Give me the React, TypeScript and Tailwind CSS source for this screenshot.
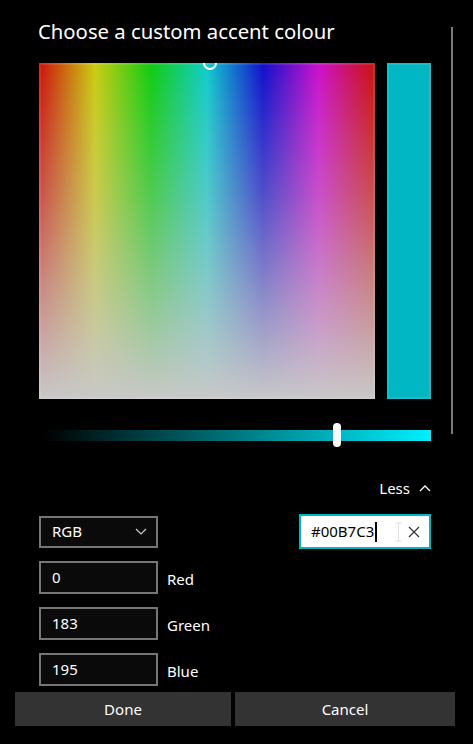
import React from "react";

const font = { fontFamily: '"Segoe UI", "Noto Sans", "Open Sans", sans-serif' };

function Field({ value, label }: { value: string; label?: string }) {
  return (
    <div className="flex items-center">
      <div className="w-[119px] h-[33px] border-2 border-[#767676] bg-[#0a0a0a] flex items-center pl-[11px] text-[15px] text-white">
        {value}
      </div>
      {label && <div className="ml-[9px] mt-[4px] text-[15px] text-white">{label}</div>}
    </div>
  );
}

export default function App() {
  return (
    <div className="w-[473px] h-[744px] bg-black relative overflow-hidden text-white" style={font}>
      <div className="h-[692px] overflow-hidden pl-[39px] pt-[17px]">
        <div className="text-[20.3px] leading-[28px] -ml-[1px]">Choose a custom accent colour</div>
        <div className="flex mt-[18px] gap-[12px]">
          <div
            className="relative w-[336px] h-[336px] overflow-hidden"
            style={{
              background:
                "linear-gradient(to bottom, rgba(200,200,200,0) 0%, rgba(200,200,200,0.35) 40%, rgba(200,200,200,1) 100%), linear-gradient(to right, rgb(204,16,12) 0%, rgb(204,204,16) 16.67%, rgb(16,204,16) 33.33%, rgb(16,204,204) 50%, rgb(16,16,204) 66.67%, rgb(204,16,204) 83.33%, rgb(204,16,12) 100%)",
            }}
          >
            <div className="absolute inset-0 border-2 border-white/10" />
            <div className="absolute left-[164px] top-[-7px] w-[14px] h-[14px] rounded-full border-2 border-white" />
          </div>
          <div className="w-[44px] h-[336px] bg-[#00B7C3] border-2 border-white/10" />
        </div>
        <div className="relative mt-[31px] ml-[4px] w-[388px] h-[11px]">
          <div
            className="w-full h-full"
            style={{ background: "linear-gradient(to right, #000000, #00f0ff)" }}
          />
          <div className="absolute left-[290px] top-[-7px] w-[8px] h-[24px] rounded-full bg-white" />
        </div>
        <div className="flex justify-end items-center w-[392px] mt-[37px] text-[15px] leading-[20px]">
          <span>Less</span>
          <svg className="ml-[9px]" width="12" height="8" viewBox="0 0 12 8">
            <path d="M1 7 L6 2 L11 7" fill="none" stroke="white" strokeWidth="1.3" />
          </svg>
        </div>
        <div className="flex justify-between items-center w-[392px] mt-[16px]">
          <div className="w-[119px] h-[32px] border-2 border-[#767676] bg-[#0a0a0a] flex items-center justify-between pl-[11px] pr-[9px] text-[15px]">
            <span>RGB</span>
            <svg width="12" height="7" viewBox="0 0 12 7">
              <path d="M1 1 L6 6 L11 1" fill="none" stroke="#cccccc" strokeWidth="1.2" />
            </svg>
          </div>
          <div className="relative w-[132px] h-[35px] border-2 border-[#00B7C3] bg-white flex items-center pl-[10px] pr-[9px] text-black text-[15px]">
            <span>#00B7C3</span>
            <span className="w-[2px] h-[20px] bg-black ml-[1px]" />
            <span className="flex-1" />
            <svg className="absolute left-[94px] top-[6px]" width="7" height="20" viewBox="0 0 7 20">
              <path d="M0.5 1 H6.5 M3.5 1 V19 M0.5 19 H6.5" fill="none" stroke="#e0e0e0" strokeWidth="1" />
            </svg>
            <svg width="12" height="12" viewBox="0 0 12 12">
              <path d="M1 1 L11 11 M11 1 L1 11" fill="none" stroke="#333" strokeWidth="1.2" />
            </svg>
          </div>
        </div>
        <div className="flex flex-col gap-[13px] mt-[12px]">
          <Field value="0" label="Red" />
          <Field value="183" label="Green" />
          <Field value="195" label="Blue" />
        </div>
      </div>
      <div className="absolute left-[451px] top-[27px] w-[2px] h-[407px] bg-[#7a7a7a]" />
      <div className="flex gap-[4px] pl-[15px]">
        <button className="w-[216px] h-[34px] bg-[#333333] text-[15px] text-white">Done</button>
        <button className="w-[220px] h-[34px] bg-[#333333] text-[15px] text-white">Cancel</button>
      </div>
    </div>
  );
}
